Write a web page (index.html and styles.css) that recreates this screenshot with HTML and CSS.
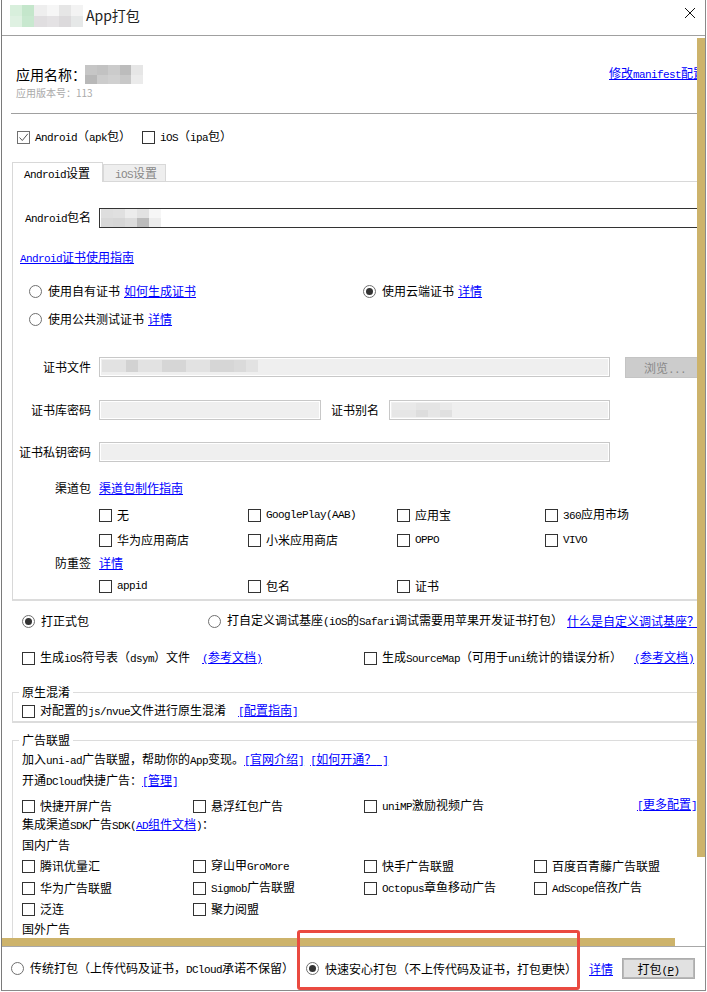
FILE: index.html
```html
<!DOCTYPE html>
<html lang="zh-CN">
<head>
<meta charset="utf-8">
<title>App打包</title>
<link rel="stylesheet" href="styles.css">
</head>
<body>
<div class="window">
  <header class="titlebar">
    <svg class="blob" width="73" height="22" viewBox="0 0 6 2" preserveAspectRatio="none" shape-rendering="crispEdges"><rect width="1" height="1" fill="#d8efdc"/><rect x="1" width="1" height="1" fill="#c4e6cb"/><rect x="2" width="1" height="1" fill="#eeeeee"/><rect x="3" width="1" height="1" fill="#f6f6f6"/><rect x="4" width="1" height="1" fill="#e6e6e6"/><rect x="5" width="1" height="1" fill="#f3f3f3"/><rect y="1" width="1" height="1" fill="#dff1e2"/><rect x="1" y="1" width="1" height="1" fill="#c8e8cf"/><rect x="2" y="1" width="1" height="1" fill="#e0dee0"/><rect x="3" y="1" width="1" height="1" fill="#e4e2e4"/><rect x="4" y="1" width="1" height="1" fill="#dcdadc"/><rect x="5" y="1" width="1" height="1" fill="#e6e8e8"/></svg>
    <span class="app-title">App打包</span>
    <svg class="close" width="12" height="12" viewBox="0 0 12 12"><path d="M1 1L11 11M11 1L1 11" stroke="#111" stroke-width="1" fill="none"/></svg>
  </header>

  <main class="scroll">
    <div class="content">
      <section class="app-head">
        <div class="name-row">
          <span class="app-name">应用名称：</span>
          <svg class="blob" width="58" height="19" viewBox="0 0 5 2" preserveAspectRatio="none" shape-rendering="crispEdges"><rect width="1" height="1" fill="#c6c6c6"/><rect x="1" width="1" height="1" fill="#c2c2c2"/><rect x="2" width="1" height="1" fill="#cbcbcb"/><rect x="3" width="1" height="1" fill="#bcbcbc"/><rect x="4" width="1" height="1" fill="#e6e6e6"/><rect y="1" width="1" height="1" fill="#b8b8b8"/><rect x="1" y="1" width="1" height="1" fill="#cccccc"/><rect x="2" y="1" width="1" height="1" fill="#d0d0d0"/><rect x="3" y="1" width="1" height="1" fill="#c8c8c8"/><rect x="4" y="1" width="1" height="1" fill="#ebebeb"/></svg>
          <a class="manifest" href="#">修改<span class="l">manifest</span>配置</a>
        </div>
        <div class="version">应用版本号：113</div>
      </section>

      <div class="row platforms">
        <label class="opt w-android"><span class="box on"><svg width="11" height="11" viewBox="0 0 11 11"><path d="M1.5 5.5L4.3 8.5L9.8 1.8" stroke="#555" stroke-width="1" fill="none"/></svg></span><span><span class="l">Android</span>（<span class="l">apk</span>包）</span></label>
        <label class="opt"><span class="box"></span><span><span class="l">iOS</span>（<span class="l">ipa</span>包）</span></label>
      </div>

      <div class="tabs">
        <div class="tab active"><span class="l">Android</span>设置</div>
        <div class="tab"><span class="l">iOS</span>设置</div>
      </div>

      <section class="pane">
        <div class="row field">
          <span class="label"><span class="l">Android</span>包名</span>
          <div class="input dark">
            <svg class="blob" width="60" height="18" viewBox="0 0 5 2" preserveAspectRatio="none" shape-rendering="crispEdges"><rect width="1" height="1" fill="#dedede"/><rect x="1" width="1" height="1" fill="#e0e0e0"/><rect x="2" width="1" height="1" fill="#ececec"/><rect x="3" width="1" height="1" fill="#e2e2e2"/><rect x="4" width="1" height="1" fill="#f6f6f6"/><rect y="1" width="1" height="1" fill="#d8d8d8"/><rect x="1" y="1" width="1" height="1" fill="#d6d6d6"/><rect x="2" y="1" width="1" height="1" fill="#dcdcdc"/><rect x="3" y="1" width="1" height="1" fill="#bcbcbc"/><rect x="4" y="1" width="1" height="1" fill="#ececec"/></svg>
          </div>
        </div>

        <div class="row guide mt20"><a href="#"><span class="l">Android</span>证书使用指南</a></div>

        <div class="row cert mt13">
          <label class="opt w-own"><span class="radio"></span><span>使用自有证书</span><a class="tail" href="#">如何生成证书</a></label>
          <label class="opt"><span class="radio on"></span><span>使用云端证书</span><a class="tail" href="#">详情</a></label>
        </div>
        <div class="row cert mt8">
          <label class="opt"><span class="radio"></span><span>使用公共测试证书</span><a class="tail" href="#">详情</a></label>
        </div>

        <div class="row field mt28">
          <span class="label">证书文件</span>
          <div class="input w-full">
            <svg class="blob" width="156" height="12" viewBox="0 0 13 1" preserveAspectRatio="none" shape-rendering="crispEdges"><rect width="13" height="1" fill="#e2e2e2"/><rect x="2" width="1" height="1" fill="#d2d2d2"/><rect x="5" width="2" height="1" fill="#d6d6d6"/><rect x="9" width="2" height="1" fill="#d6d6d6"/><rect x="11" width="1" height="1" fill="#dadada"/></svg>
          </div>
          <button class="browse" type="button">浏览<span class="l">...</span></button>
        </div>

        <div class="row field mt23">
          <span class="label">证书库密码</span>
          <div class="input w-short"></div>
          <span class="label-2">证书别名</span>
          <div class="input w-alias">
            <svg class="blob" width="60" height="14" viewBox="0 0 5 2" preserveAspectRatio="none" shape-rendering="crispEdges"><rect width="5" height="1" fill="#e9e9e9"/><rect x="2" width="2" height="1" fill="#e4e4e4"/><rect y="1" width="5" height="1" fill="#e6e6e6"/><rect x="2" y="1" width="1" height="1" fill="#dddddd"/><rect x="4" y="1" width="1" height="1" fill="#e0e0e0"/></svg>
          </div>
        </div>

        <div class="row field mt22">
          <span class="label">证书私钥密码</span>
          <div class="input w-full"></div>
        </div>

        <div class="row field mt16">
          <span class="label">渠道包</span>
          <a href="#">渠道包制作指南</a>
        </div>

        <div class="checks mt6">
          <label class="opt"><span class="box"></span><span>无</span></label>
          <label class="opt"><span class="box"></span><span class="l">GooglePlay(AAB)</span></label>
          <label class="opt"><span class="box"></span><span>应用宝</span></label>
          <label class="opt"><span class="box"></span><span><span class="l">360</span>应用市场</span></label>
        </div>
        <div class="checks mt6">
          <label class="opt"><span class="box"></span><span>华为应用商店</span></label>
          <label class="opt"><span class="box"></span><span>小米应用商店</span></label>
          <label class="opt"><span class="box"></span><span class="l">OPPO</span></label>
          <label class="opt"><span class="box"></span><span class="l">VIVO</span></label>
        </div>

        <div class="row field mt3">
          <span class="label">防重签</span>
          <a href="#">详情</a>
        </div>
        <div class="checks mt3">
          <label class="opt"><span class="box"></span><span class="l">appid</span></label>
          <label class="opt"><span class="box"></span><span>包名</span></label>
          <label class="opt"><span class="box"></span><span>证书</span></label>
        </div>
      </section>

      <div class="row outer mt10">
        <label class="opt w-formal"><span class="radio on"></span><span>打正式包</span></label>
        <label class="opt w-base"><span class="radio"></span><span>打自定义调试基座<span class="l">(iOS</span>的<span class="l">Safari</span>调试需要用苹果开发证书打包）</span></label>
        <a href="#">什么是自定义调试基座？</a>
      </div>

      <div class="row outer mt17">
        <label class="opt w-dsym"><span class="box"></span><span>生成<span class="l">iOS</span>符号表（<span class="l">dsym</span>）文件</span><a class="doc" href="#"><span class="l">(</span>参考文档<span class="l">)</span></a></label>
        <label class="opt"><span class="box"></span><span>生成<span class="l">SourceMap</span>（可用于<span class="l">uni</span>统计的错误分析）</span><a class="doc" href="#"><span class="l">(</span>参考文档<span class="l">)</span></a></label>
      </div>

      <section class="group mt24">
        <div class="legend">原生混淆</div>
        <div class="row in-group mt1">
          <label class="opt"><span class="box"></span><span>对配置的<span class="l">js/nvue</span>文件进行原生混淆</span><a class="doc" href="#"><span class="l">[</span>配置指南<span class="l">]</span></a></label>
        </div>
      </section>

      <section class="group ads mt17">
        <div class="legend">广告联盟</div>
        <div class="row in-group mt2"><span>加入<span class="l">uni-ad</span>广告联盟，帮助你的<span class="l">App</span>变现。<a href="#"><span class="l">[</span>官网介绍<span class="l">]</span></a><a class="link-b" href="#"><span class="l">[</span>如何开通？<span class="l">&nbsp;]</span></a></span></div>
        <div class="row in-group mt1"><span>开通<span class="l">DCloud</span>快捷广告：<a href="#"><span class="l">[</span>管理<span class="l">]</span></a></span></div>
        <div class="ad-grid mt4">
          <label class="opt"><span class="box"></span><span>快捷开屏广告</span></label>
          <label class="opt"><span class="box"></span><span>悬浮红包广告</span></label>
          <label class="opt"><span class="box"></span><span><span class="l">uniMP</span>激励视频广告</span></label>
          <a class="more" href="#"><span class="l">[</span>更多配置<span class="l">]</span></a>
        </div>
        <div class="row in-group"><span>集成渠道<span class="l">SDK</span>广告<span class="l">SDK(</span><a href="#"><span class="l">AD</span>组件文档</a><span class="l">)</span>：</span></div>
        <div class="row in-group">国内广告</div>
        <div class="ad-grid">
          <label class="opt"><span class="box"></span><span>腾讯优量汇</span></label>
          <label class="opt"><span class="box"></span><span>穿山甲<span class="l">GroMore</span></span></label>
          <label class="opt"><span class="box"></span><span>快手广告联盟</span></label>
          <label class="opt"><span class="box"></span><span>百度百青藤广告联盟</span></label>
        </div>
        <div class="ad-grid mt2">
          <label class="opt"><span class="box"></span><span>华为广告联盟</span></label>
          <label class="opt"><span class="box"></span><span><span class="l">Sigmob</span>广告联盟</span></label>
          <label class="opt"><span class="box"></span><span><span class="l">Octopus</span>章鱼移动广告</span></label>
          <label class="opt"><span class="box"></span><span><span class="l">AdScope</span>倍孜广告</span></label>
        </div>
        <div class="ad-grid mt2">
          <label class="opt"><span class="box"></span><span>泛连</span></label>
          <label class="opt"><span class="box"></span><span>聚力阅盟</span></label>
        </div>
        <div class="row in-group">国外广告</div>
      </section>
    </div>
    <div class="vbar"></div>
    <div class="hbar"></div>
  </main>

  <footer class="footer">
    <label class="opt w-classic"><span class="radio"></span><span>传统打包（上传代码及证书，<span class="l">DCloud</span>承诺不保留）</span></label>
    <label class="opt w-fast"><span class="radio on"></span><span>快速安心打包（不上传代码及证书，打包更快）</span></label>
    <a class="foot-link" href="#">详情</a>
    <button class="pack" type="button">打包<span class="l">(<span class="ul">P</span>)</span></button>
  </footer>
  <div class="highlight"></div>
</div>
</body>
</html>
```

FILE: styles.css
```css
* { box-sizing: border-box; }
html, body { margin: 0; padding: 0; background: #fff; }
body {
  width: 707px;
  height: 992px;
  overflow: hidden;
  font: 12px/20px "Noto Sans CJK SC", "Noto Sans", sans-serif;
  color: #000;
}
a { color: #00f; text-decoration: underline; white-space: nowrap; }
.l {
  font-family: "Liberation Mono", "Noto Sans CJK SC", monospace;
  font-size: 11px;
  letter-spacing: -0.6px;
}
.blob { display: block; flex: none; }

.window {
  position: relative;
  width: 705px;
  height: 991px;
  margin-left: 1px;
  border-left: 1px solid #7a7a7a;
  border-right: 1px solid #8a8a8a;
  border-bottom: 1px solid #8a8a8a;
  display: flex;
  flex-direction: column;
}

/* title */
.titlebar {
  flex: none;
  height: 36px;
  border-bottom: 1px solid #a0a0a0;
  display: flex;
  align-items: flex-start;
  padding: 5px 9px 0 8px;
}
.app-title { margin-left: 3px; font-size: 14px; line-height: 20px; color: #222; }
.close { margin: 2px 0 0 auto; }

/* scrolling region */
.scroll { position: relative; flex: 1; min-height: 0; overflow: hidden; }
.content { width: 695px; height: 100%; overflow: hidden; }
.vbar { position: absolute; left: 695px; top: 2px; width: 8px; height: 819px; background: #cdb36b; }
.hbar { position: absolute; left: 0; bottom: 0; width: 673px; height: 8px; background: #cdb36b; }

.row { height: 20px; display: flex; align-items: center; white-space: nowrap; }
.opt { flex: none; display: flex; align-items: center; white-space: nowrap; }
.box { flex: none; width: 13px; height: 13px; border: 1px solid #333; margin-right: 5px; background: #fff; display: flex; align-items: center; justify-content: center; }
.box.on { border-color: #707070; }
.radio { flex: none; position: relative; width: 13px; height: 13px; border: 1px solid #6f6f6f; border-radius: 50%; margin-right: 6px; background: #fff; }
.radio.on::after { content: ""; position: absolute; left: 2px; top: 2px; width: 7px; height: 7px; border-radius: 50%; background: #333; }

/* application head */
.app-head { height: 78px; margin-left: 9px; border-bottom: 1px solid #a0a0a0; padding-top: 28px; }
.name-row { height: 20px; display: flex; align-items: center; padding-left: 5px; }
.app-name { flex: none; width: 69px; font-size: 14px; white-space: nowrap; }
.manifest { flex: none; margin-left: 466px; }
.version { font-size: 10px; line-height: 14px; margin-top: 2px; padding-left: 5px; color: #aaa; }

.platforms { margin-top: 13px; padding-left: 15px; }
.w-android { width: 125px; }

/* tabs */
.tabs { margin: 15px 0 0 10px; height: 20px; border-bottom: 1px solid #d8d8d8; display: flex; align-items: flex-end; position: relative; }
.tab { height: 17px; width: 63px; padding-left: 11px; line-height: 16px; background: #eee; border: 1px solid #d8d8d8; border-bottom: 0; color: #888; }
.tab.active { width: 91px; height: 20px; line-height: 20px; margin-bottom: -1px; background: #fff; color: #000; border-bottom: 0; }

.pane { margin-left: 10px; height: 419px; padding-top: 26px; border-left: 1px solid #d8d8d8; border-bottom: 2px solid #dcdcdc; }
.mt1 { margin-top: 1px; } .mt2 { margin-top: 2px; } .mt3 { margin-top: 3px; } .mt4 { margin-top: 4px; }
.mt6 { margin-top: 6px; } .mt8 { margin-top: 8px; } .mt10 { margin-top: 10px; } .mt13 { margin-top: 13px; }
.mt16 { margin-top: 16px; } .mt17 { margin-top: 17px; } .mt20 { margin-top: 20px; } .mt22 { margin-top: 22px; }
.mt23 { margin-top: 23px; } .mt24 { margin-top: 24px; } .mt28 { margin-top: 28px; }

.label { width: 78px; margin-right: 8px; text-align: right; flex: none; }
.label-2 { flex: none; width: 48px; margin: 0 10px; text-align: right; }
.input { flex: none; height: 20px; border: 1px solid #c8c8c8; background: #efefef; box-shadow: inset 0 0 0 1px #fff; padding: 2px; overflow: hidden; }
.input.dark { flex: 1; min-width: 700px; background: #fff; border-color: #333; box-shadow: none; padding: 0 1px; }
.w-full { width: 511px; }
.w-short { width: 222px; }
.w-alias { width: 221px; }
.browse { flex: none; width: 80px; height: 21px; margin-left: 15px; border: 1px solid #c4c4c4; background: #ccc; color: #888; font: inherit; padding: 0; }

.guide { padding-left: 7px; }
.cert { padding-left: 16px; }
.w-own { width: 334px; }
.tail { margin-left: 4px; }

.checks { display: grid; grid-template-columns: 149px 149px 148px 1fr; height: 20px; margin-left: 86px; }

/* below the pane */
.outer { padding-left: 20px; }
.w-formal { width: 186px; }
.w-base { width: 359px; }
.w-dsym { width: 342px; }
.doc { margin-left: 12px; }

.group { margin-left: 10px; border: 1px solid #dcdcdc; border-width: 1px 0 2px 1px; height: 31px; }
.legend { width: fit-content; height: 16px; line-height: 16px; margin: -9px 0 0 6px; padding: 0 3px; background: #fff; }
.in-group { padding-left: 9px; }
.ads { height: 240px; border-bottom: 0; }
.link-b { margin-left: 6px; }
.ad-grid { display: grid; grid-template-columns: 171px 171px 170px 1fr; height: 20px; margin-left: 9px; }
.more { justify-self: end; margin-top: -1px; height: 20px; }

/* footer */
.footer { flex: none; height: 44px; border-top: 1px solid #a8a8a8; display: flex; align-items: center; padding: 0 9px; background: #fff; }
.w-classic { width: 295px; }
.w-fast { width: 283px; }
.foot-link { margin-right: 9px; }
.pack { width: 73px; height: 21px; border: 1px solid #adadad; outline: 1px solid #b8b8b8; outline-offset: -2px; background: #e1e1e1; color: #000; font: inherit; padding: 0; }
.ul { text-decoration: underline; }

.highlight { position: absolute; left: 295px; top: 930px; width: 283px; height: 60px; border: 3px solid #ea4a40; border-radius: 3px; pointer-events: none; }
```
